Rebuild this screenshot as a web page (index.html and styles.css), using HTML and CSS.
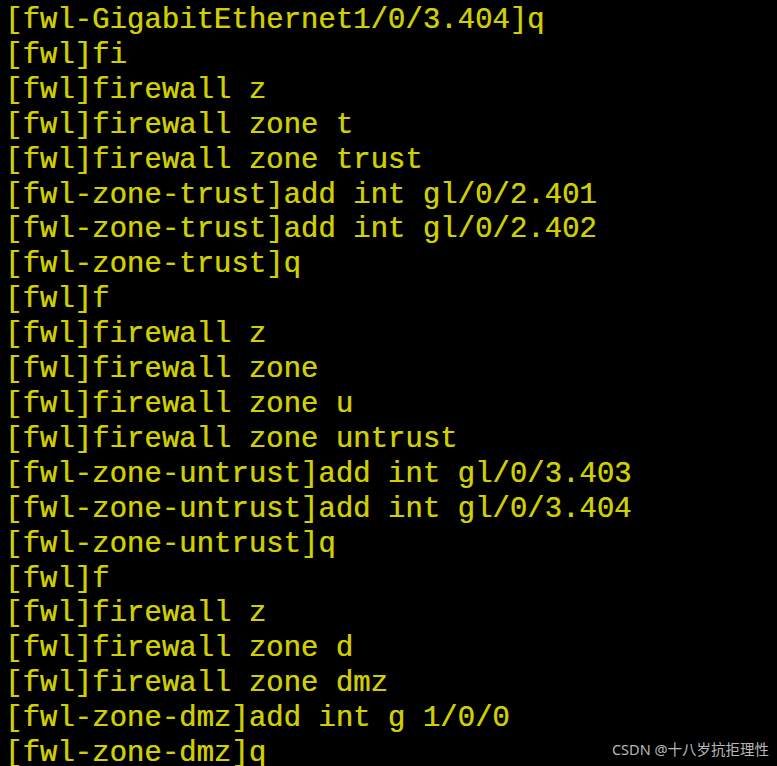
FILE: index.html
```html
<!DOCTYPE html>
<html>
<head>
<meta charset="utf-8">
<link rel="stylesheet" href="styles.css">
</head>
<body>
<pre class="term">[fwl-GigabitEthernet1/0/3.404]q
[fwl]fi
[fwl]firewall z
[fwl]firewall zone t
[fwl]firewall zone trust
[fwl-zone-trust]add int gl/0/2.401
[fwl-zone-trust]add int gl/0/2.402
[fwl-zone-trust]q
[fwl]f
[fwl]firewall z
[fwl]firewall zone
[fwl]firewall zone u
[fwl]firewall zone untrust
[fwl-zone-untrust]add int gl/0/3.403
[fwl-zone-untrust]add int gl/0/3.404
[fwl-zone-untrust]q
[fwl]f
[fwl]firewall z
[fwl]firewall zone d
[fwl]firewall zone dmz
[fwl-zone-dmz]add int g 1/0/0
[fwl-zone-dmz]q</pre>
<div class="mark">CSDN @十八岁抗拒理性</div>
</body>
</html>
```

FILE: styles.css
```css
html, body {
  margin: 0;
  padding: 0;
  background: #000;
  height: 766px;
  overflow: hidden;
}
.term {
  margin: 0;
  padding: 4px 0 0 5px;
  font-family: "Liberation Mono", "Courier New", monospace;
  font-size: 29px;
  font-weight: normal;
  line-height: 34.9px;
  color: #d0d000;
  text-shadow: 0.5px 0 0 #a0a000;
}
.mark {
  position: absolute;
  right: 8px;
  bottom: 7px;
  font-family: "Noto Sans", "Noto Sans CJK SC", sans-serif;
  font-size: 14.5px;
  color: #b8b8b8;
}
```
